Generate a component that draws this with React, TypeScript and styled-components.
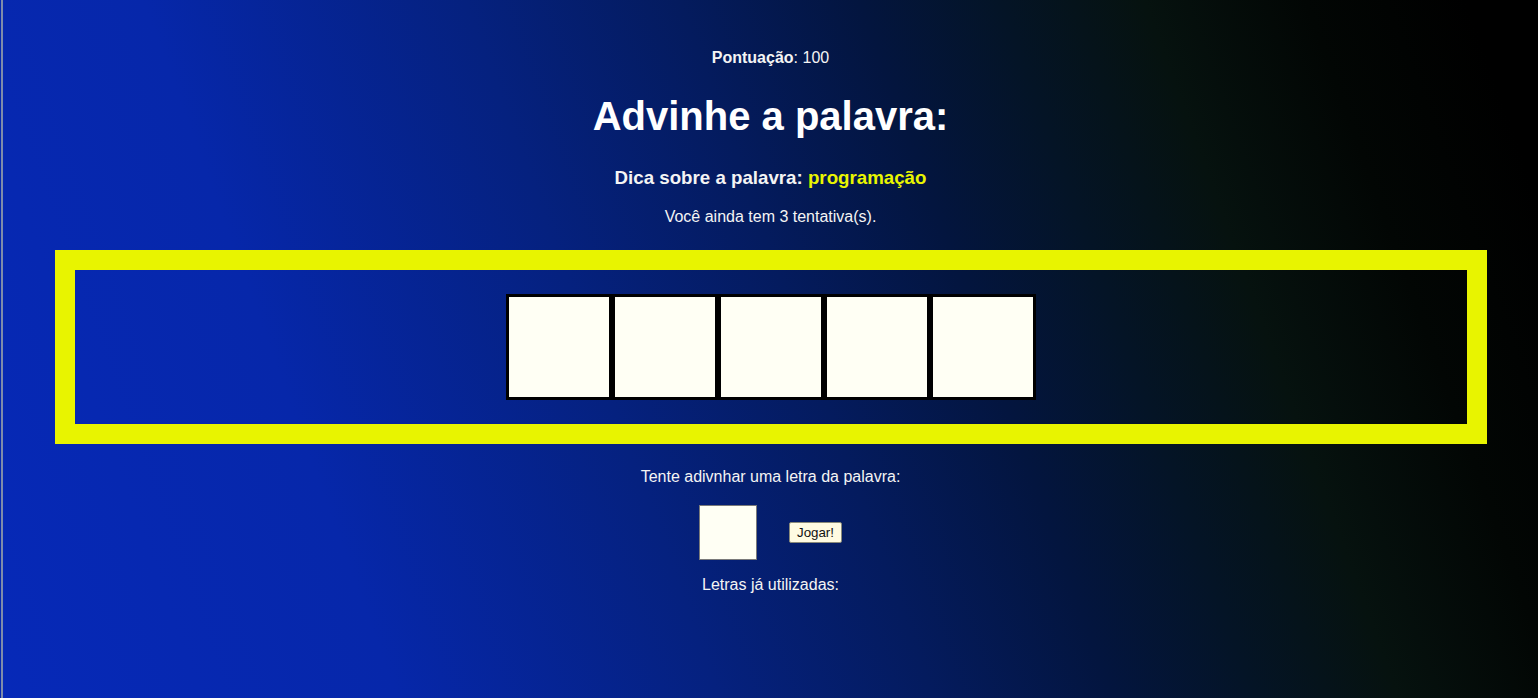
import React from "react";
import styled, { createGlobalStyle } from "styled-components";

const GlobalStyle = createGlobalStyle`
  html, body {
    margin: 0;
    padding: 0;
    background: #0628b0;
  }
  body {
    font-family: "Liberation Sans", Arial, sans-serif;
  }
`;

const Page = styled.div`
  min-height: 698px;
  box-sizing: border-box;
  margin-left: 1px;
  border-left: 2px solid #7e8cab;
  background: linear-gradient(
    70deg,
    #0629b8 0%,
    #0627aa 22%,
    #05217f 40%,
    #041b5e 52%,
    #03153f 62%,
    #041426 70%,
    #06120f 78%,
    #020604 87%,
    #000000 96%
  );
  color: #f4f4f4;
  display: flex;
  flex-direction: column;
  align-items: center;
  padding-top: 49px;
  text-align: center;
`;

const Score = styled.p`
  margin: 0;
  font-size: 16px;
  line-height: 18.4px;
`;

const Title = styled.h1`
  margin: 27px 0 0;
  font-size: 40px;
  line-height: 45px;
  font-weight: 700;
  color: #ffffff;
`;

const Hint = styled.h3`
  margin: 28px 0 0;
  font-size: 18.72px;
  line-height: 21.5px;
  font-weight: 700;
`;

const HintWord = styled.span`
  color: #e9f500;
`;

const Attempts = styled.p`
  margin: 19px 0 0;
  font-size: 16px;
  line-height: 18.4px;
`;

const Board = styled.div`
  align-self: stretch;
  margin: 24px 51px 0 52px;
  border: 20px solid #e8f400;
  padding: 24px 0 24px;
  display: flex;
  justify-content: center;
`;

const Tile = styled.div`
  width: 100px;
  height: 100px;
  border: 3px solid #000;
  background: #fffff4;
`;

const Prompt = styled.p`
  margin: 24px 0 0;
  font-size: 16px;
  line-height: 18.4px;
`;

const GuessRow = styled.div`
  margin-top: 18px;
  display: flex;
  align-items: center;
  gap: 32px;
`;

const LetterInput = styled.input`
  box-sizing: border-box;
  width: 58px;
  height: 55px;
  border: 1px solid #7a7a7a;
  background: #fffff4;
  padding: 0;
  outline: none;
`;

const PlayButton = styled.button`
  box-sizing: border-box;
  height: 21px;
  padding: 0 7px;
  font-family: "Liberation Sans", Arial, sans-serif;
  font-size: 13.33px;
  color: #111;
  background: #fffbe2;
  border: 1px solid #8a8a7a;
  border-radius: 2px;
`;

const UsedLetters = styled.p`
  margin: 16px 0 0;
  font-size: 16px;
  line-height: 18.4px;
`;

export default function App() {
  const tiles = [0, 1, 2, 3, 4];
  return (
    <>
      <GlobalStyle />
      <Page>
        <Score>
          <strong>Pontuação</strong>: 100
        </Score>
        <Title>Advinhe a palavra:</Title>
        <Hint>
          Dica sobre a palavra: <HintWord>programação</HintWord>
        </Hint>
        <Attempts>Você ainda tem 3 tentativa(s).</Attempts>
        <Board>
          {tiles.map((t) => (
            <Tile key={t} />
          ))}
        </Board>
        <Prompt>Tente adivnhar uma letra da palavra:</Prompt>
        <GuessRow>
          <LetterInput type="text" maxLength={1} />
          <PlayButton>Jogar!</PlayButton>
        </GuessRow>
        <UsedLetters>Letras já utilizadas:</UsedLetters>
      </Page>
    </>
  );
}
